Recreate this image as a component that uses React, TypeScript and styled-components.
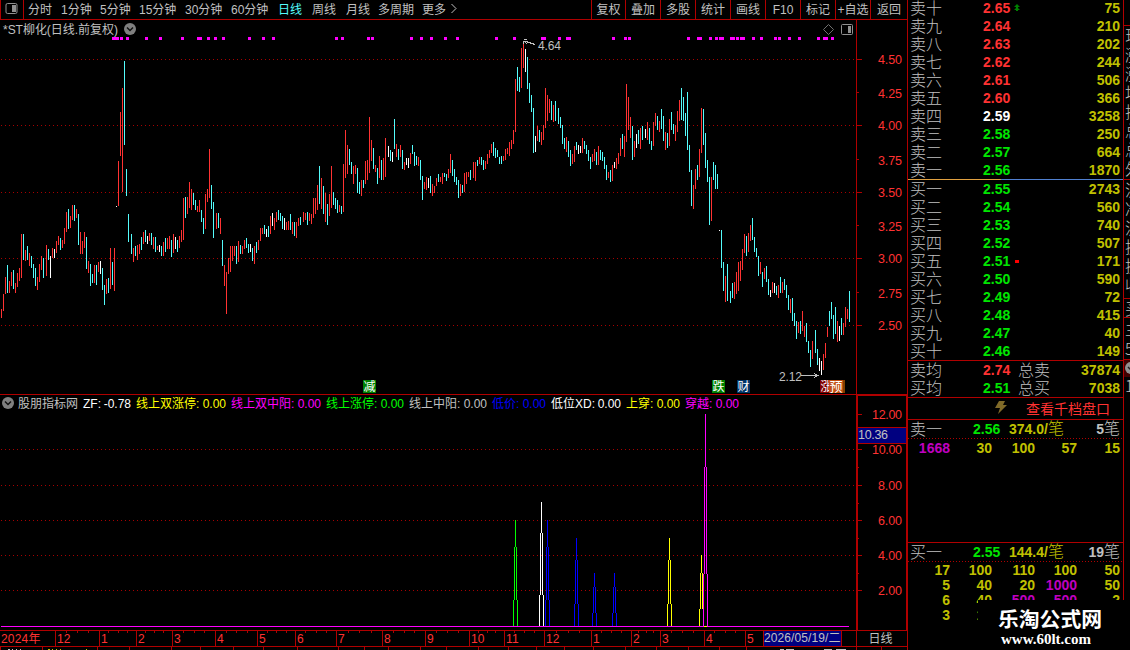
import React from "react";
import styled, { createGlobalStyle } from "styled-components";

const SANS = '"Liberation Sans", "Noto Sans CJK SC", sans-serif';
const RED = "#b00000";
const C = {
  r: "#ff3232",
  c: "#54fcfc",
  w: "#ffffff",
  gray: "#c0c0c0",
  green: "#00e600",
  yellow: "#c0c000",
  magenta: "#c000c0",
  hot: "#ff00ff",
};

const Global = createGlobalStyle`
  html, body { margin: 0; background: #000; overflow: hidden; }
  * { box-sizing: border-box; }
  body { font-family: ${SANS}; color: ${C.gray}; }
  svg { display: block; }
  svg text { font-family: ${SANS}; }
`;

const Screen = styled.div`
  display: flex;
  width: 1130px;
  height: 650px;
  background: #000;
  overflow: hidden;
`;
const Left = styled.main`
  width: 907px;
  display: flex;
  flex-direction: column;
`;

/* ---------- toolbar ---------- */
const Toolbar = styled.nav`
  height: 20px;
  display: flex;
  border-bottom: 1px solid ${RED};
  font-size: 12px;
  line-height: 20px;
  white-space: nowrap;
`;
const PanelToggle = styled.div`
  width: 24px;
  border: solid ${RED};
  border-width: 0 1px;
  padding: 3px 0 0 4px;
`;
const Periods = styled.div`
  flex: 1;
  display: flex;
  padding-left: 4px;
`;
const Period = styled.span<{ $w: number; $on?: boolean }>`
  width: ${(p) => p.$w}px;
  color: ${(p) => (p.$on ? C.c : C.gray)};
`;
const Tool = styled.span<{ $w?: number }>`
  width: ${(p) => p.$w ?? 35}px;
  border-left: 1px solid ${RED};
  text-align: center;
`;

const PERIODS: [string, number][] = [
  ["分时", 33], ["1分钟", 39], ["5分钟", 39], ["15分钟", 46], ["30分钟", 46], ["60分钟", 47],
  ["日线", 34], ["周线", 34], ["月线", 32], ["多周期", 44], ["更多", 28],
];
const TOOLS: [string, number][] = [
  ["复权", 34], ["叠加", 35], ["多股", 35], ["统计", 35], ["画线", 35], ["F10", 35], ["标记", 35], ["+自选", 35], ["返回", 37],
];

/* ---------- price chart data: colour, top, bottom; "+" opens a one pixel gap ---------- */
const BARS = `r309,318 r294,311 r277,294 c265,293 r281,293 r272,286 c270,289 r283,293 r273,287 r268,281 r234,278 c234,260 r250,261 c246,260 r253,266 c256,268 c264,278 c268,286 r277,290 r264,282 r256,270 c258,278 + r245,276 c249,260 w256,278 r248,258 w249,258 r241,253 r236,245 c238,250 r240,248 r228,244 r212,232 c209,229 r216,228 r205,220 c205,221 r209,218 c214,245 r232,254 r241,254 r232,248 c237,269 r261,273 c264,286 c274,283 r265,283 c265,285 r262,272 w261,274 c268,290 c285,305 r279,294 c278,293 r248,289 c262,285 r248,291 w206,207 r161,206 r112,156 r88,192 c61,145 c169,196 c214,242 + c234,254 r248,262 c246,256 r245,260 r244,254 c237,250 r232,244 c230,242 w236,244 r233,241 c233,245 r237,249 c237,252 r246,250 w245,252 c246,256 r242,256 c238,252 r238,249 r236,249 c240,257 r234,253 w237,249 c240,252 r236,248 r230,242 r198,240 c197,218 r197,214 r182,208 r189,210 c193,205 c200,210 r206,212 r200,212 c210,222 c218,234 r194,229 r189,202 r149,198 c185,209 c202,238 + r213,229 c213,228 r218,234 c240,266 r265,286 r272,314 r258,274 r246,272 r246,261 r246,256 c246,264 r241,262 c245,254 r246,254 r240,249 c238,248 c244,253 w244,252 c248,261 r246,264 c242,253 r240,250 r228,241 r228,234 c225,234 w229,237 c226,237 r216,234 w213,226 r218,230 r212,222 c210,220 c213,221 c216,229 w218,230 r222,230 r221,230 c214,230 r222,234 c222,236 r222,238 r218,226 c217,225 + r212,222 r213,220 c212,225 r213,221 r214,224 r198,218 r198,214 r185,210 c166,204 r178,209 c186,214 r193,222 c204,225 r194,216 r166,208 c192,205 c198,209 c200,213 r205,212 c206,214 r164,212 r130,178 r145,174 c149,165 c162,174 r166,184 r165,174 c168,193 c182,194 r180,196 c180,188 r161,184 r160,180 r117,173 r140,161 c148,169 r165,172 c168,184 r156,178 c160,180 r158,180 r138,177 + w146,157 c150,161 w152,162 c119,149 r144,157 c149,160 r145,157 c150,169 r162,170 w158,165 w158,168 r153,164 c145,154 c152,166 c156,165 r157,166 c160,180 c176,200 r182,189 r177,190 w178,188 c176,193 r184,196 r186,193 r178,186 c174,182 r177,182 r173,184 c173,177 c174,181 r169,178 r154,173 c160,176 c169,182 c177,185 c180,198 r184,196 c185,193 r173,192 r172,184 r172,177 c170,180 + r162,178 r162,181 c160,166 r157,164 c157,165 c160,170 r161,169 r154,164 r150,158 r144,153 c142,156 c148,158 c150,157 c157,164 c156,164 r156,161 r149,160 r148,154 r142,156 r140,149 r130,144 r79,132 c67,91 c77,92 r48,88 r43,68 w49,72 c57,89 c83,103 c95,112 c108,153 w136,152 r126,141 c130,142 r132,145 r125,140 r88,128 r95,121 r99,113 c101,120 r105,122 c101,121 + c108,124 c117,128 c125,144 c138,149 r137,152 c141,157 c150,166 r154,164 r146,162 c142,150 w145,154 w146,153 r138,153 c141,149 c145,154 c150,161 c157,169 r154,162 r149,161 c152,165 r146,165 c150,160 c152,161 c157,169 c165,180 r172,178 c170,182 r165,181 w162,168 r158,169 r153,164 r138,156 c134,149 r136,157 r84,142 r97,130 r117,138 c126,160 r141,157 w134,148 c130,144 r128,149 c126,140 + w129,138 r122,140 c128,144 c141,150 r122,146 r113,126 c116,130 r121,132 c109,129 c116,141 r132,150 c133,148 r119,146 c112,130 c124,134 r125,141 r111,132 r100,121 c88,120 c97,121 c113,136 c92,150 c145,172 c170,206 r185,209 r169,189 c165,180 r149,177 r108,153 c109,145 c133,168 c160,182 c177,225 r177,221 c162,180 c165,189 c174,189 w230,231 c230,268 c262,291 r276,302 c264,301 + c291,303 c283,298 r282,299 r272,294 r262,291 r261,281 r249,270 r234,253 c236,256 r233,252 r225,241 c218,240 c237,252 c248,257 c256,276 r262,274 c272,287 r268,279 c266,282 c279,295 w290,297 r282,293 w283,293 c286,295 r285,298 c277,293 r282,293 c279,290 c285,298 c295,310 r299,313 c298,321 c313,326 c321,339 r322,333 c321,334 r311,331 r326,337 c323,342 c341,353 c350,367 r341,359 + c330,353 c349,365 w358,371 w361,375 r354,370 r343,358 r327,337 c311,326 c302,319 c315,339 c307,334 r321,342 w326,341 c318,335 r323,335 r307,327 r309,319 c291,322`;

type Bar = { x: number; k: "r" | "c" | "w"; a: number; b: number };
const bars: Bar[] = [];
let cursor = 1;
BARS.split(" ").forEach((t) => {
  if (t === "+") {
    cursor += 1;
    return;
  }
  const [a, b] = t.slice(1).split(",").map(Number);
  bars.push({ x: cursor, k: t[0] as Bar["k"], a, b });
  cursor += 2;
});

const SIGNALS: [number, number?][] = [
  [112, 7], [120], [126], [145], [159], [181], [197, 5], [207], [214], [222], [248], [262], [272], [335], [341], [367], [371],
  [410], [420], [430], [444], [456], [495], [513], [541, 5], [558], [566, 5], [612], [624], [628], [687], [697, 5], [709],
  [715], [719, 5], [730, 5], [736], [740, 5], [752], [760], [774], [778], [788], [798], [817], [823, 5], [831],
];

const Grid = ({ ys }: { ys: number[] }) => (
  <>
    {ys.map((y) => (
      <line key={y} x1="1" x2="856" y1={y + 0.5} y2={y + 0.5} stroke="#a80000" strokeDasharray="1 3" />
    ))}
  </>
);
const Ticks = ({ ys, w }: { ys: number[]; w: number }) => (
  <>
    {ys.map((y) => (
      <rect key={y} x="857" y={y} width={w} height="1" fill={RED} />
    ))}
  </>
);
const Scale = ({ items }: { items: [string, number][] }) => (
  <>
    {items.map(([t, y]) => {
      const w = t.length > 4 ? 30 : 24;
      return (
        <text key={t} x={902 - w} y={y} textLength={w} fontSize="12.5" fill={C.r}>{t}</text>
      );
    })}
  </>
);
const Chevron = ({ cx, cy }: { cx: number; cy: number }) => (
  <g>
    <circle cx={cx} cy={cy} r="6" fill="#808080" />
    <path d={`M${cx - 3} ${cy - 1.5}l3 3l3-3`} fill="none" stroke="#111" strokeWidth="1.5" />
  </g>
);
const Badge = ({ x, w = 13, fill, t, size = 12 }: { x: number; w?: number; fill: string; t: string; size?: number }) => (
  <g>
    <rect x={x} y="380" width={w} height="13" fill={fill} />
    <text x={x + 0.5} y="391" fontSize={size} fill="#fff">{t}</text>
  </g>
);

const PriceChart = () => (
  <svg width="907" height="374" viewBox="0 20 907 374" shapeRendering="crispEdges">
    <Grid ys={[59, 125, 192, 258, 325]} />
    <text x="3" y="34" fontSize="12" textLength="115" fill={C.gray}>*ST柳化(日线.前复权)</text>
    <g shapeRendering="auto">
      <Chevron cx={130} cy={29} />
      <path d="M828.5 24.5l5 5l-5 5l-5-5z" fill="none" stroke="#707070" />
      <rect x="841.5" y="24.5" width="11" height="10" rx="1" fill="none" stroke="#909090" />
      <rect x="848" y="26" width="3" height="7" fill="#909090" />
    </g>
    {SIGNALS.map(([x, w]) => (
      <rect key={x} x={x} y="37" width={w ?? 3} height="3" fill={C.hot} />
    ))}
    {bars.map((b) => (
      <rect key={b.x} x={b.x} y={b.a} width="1" height={b.b - b.a} fill={C[b.k]} />
    ))}
    <path d="M523 41.5l3 0l9 3M523.5 41v3M524 39.5h3M524 41l3 3" fill="none" stroke={C.gray} />
    <text x="538" y="50" fontSize="12" textLength="23" fill={C.gray}>4.64</text>
    <text x="779" y="381" fontSize="12" textLength="23" fill={C.gray}>2.12</text>
    <path d="M801 375.5h18M814 373.5l4 2l-4 2" fill="none" stroke={C.gray} />
    <Badge x={363} fill="#008000" t="减" />
    <Badge x={712} fill="#008000" t="跌" />
    <Badge x={737} fill="#003468" t="财" />
    <Badge x={820} fill="#800000" t="涨" />
    <rect x="843" y="380" width="2" height="13" fill="#804000" />
    <Badge x={829} w={14} fill="#c04c10" t="预" size={13} />
    <rect x="856" y="20" width="1" height="374" fill={RED} />
    <Ticks ys={[59, 125, 192, 258, 325]} w={5} />
    <Ticks ys={[92, 159, 225, 292]} w={2} />
    <Scale items={[["4.50", 64], ["4.25", 98], ["4.00", 130], ["3.75", 165], ["3.50", 197], ["3.25", 231], ["3.00", 263], ["2.75", 298], ["2.50", 330]]} />
  </svg>
);

/* ---------- indicator ---------- */
const Indicator = styled.section`
  position: relative;
  height: 236px;
`;
const Legend = styled.div`
  position: absolute;
  top: 2px;
  left: 18px;
  display: flex;
  font-size: 12px;
  line-height: 16px;
  white-space: pre;
`;
const LegendItem = styled.span<{ $w: number; $c: string }>`
  width: ${(p) => p.$w}px;
  color: ${(p) => p.$c};
  display: flex;
  justify-content: space-between;
  margin-right: 5px;
`;
const LEGEND: [string, string, number, string][] = [
  ["股朋指标网", "", 60, C.gray],
  ["ZF:", "-0.78", 48, "#fff"],
  ["线上双涨停:", "0.00", 90, "#ffff00"],
  ["线上双中阳:", "0.00", 90, C.hot],
  ["线上涨停:", "0.00", 78, "#00ff00"],
  ["线上中阳:", "0.00", 78, C.gray],
  ["低价:", "0.00", 54, "#0000ff"],
  ["低位XD:", "0.00", 70, "#fff"],
  ["上穿:", "0.00", 54, "#ffff00"],
  ["穿越:", "0.00", 54, C.hot],
];

const SPIKES: [number, number, number, number, string][] = [
  [515, 520, 547, 600, "#00ff00"],
  [541, 502, 533, 595, "#ffffff"],
  [547, 520, 547, 600, "#0000ff"],
  [576, 538, 560, 604, "#0000ff"],
  [594, 573, 587, 613, "#0000ff"],
  [614, 573, 587, 613, "#0000ff"],
  [669, 538, 560, 604, "#ffff00"],
  [701, 555, 573, 609, "#ffff00"],
  [705, 414, 467, 574, "#ff00ff"],
];

const IndicatorChart = () => (
  <svg width="907" height="236" viewBox="0 394 907 236" shapeRendering="crispEdges">
    <rect x="0" y="394" width="857" height="1" fill={RED} />
    <Grid ys={[449, 485, 520, 555, 590]} />
    <g shapeRendering="auto"><Chevron cx={8} cy={403} /></g>
    {SPIKES.map(([x, a, b, c, fill]) => (
      <path
        key={x}
        fill={fill}
        d={`M${x} ${a}h1v${b - a}h-1zM${x - 1} ${b}h1v${c - b}h-1zM${x + 1} ${b}h1v${c - b}h-1zM${x - 2} ${c}h1V626h-1zM${x + 2} ${c}h1V626h-1z`}
      />
    ))}
    <rect x="1" y="626" width="848" height="1" fill={C.hot} />
    <rect x="704" y="626" width="3" height="1" fill="#ffff00" />
    <rect x="857" y="427" width="50" height="17" fill={RED} />
    <rect x="857" y="428" width="50" height="15" fill="#000080" />
    <text x="858" y="439" fontSize="12.5" textLength="30" fill={C.gray}>10.36</text>
    <path d="M857 630V395H906.5V630" fill="none" stroke={RED} strokeWidth="2" />
    <Ticks ys={[414, 449, 485, 520, 555, 590]} w={5} />
    <Ticks ys={[467, 503, 538, 573]} w={2} />
    <Scale items={[["12.00", 419], ["10.00", 454], ["8.00", 490], ["6.00", 525], ["4.00", 560], ["2.00", 595]]} />
  </svg>
);

/* ---------- time axis ---------- */
const TimeAxis = styled.div`
  height: 17px;
  display: flex;
  border: solid ${RED};
  border-width: 1px 0;
  font-size: 12px;
  line-height: 17px;
  color: ${C.r};
`;
const Month = styled.div<{ $w: number }>`
  position: relative;
  width: ${(p) => p.$w}px;
  padding-left: 1px;
  letter-spacing: 0.2px;
  white-space: nowrap;
  & + & { border-left: 1px solid ${RED}; }
`;
const MonthTicks = styled.div`
  position: absolute;
  inset: 0;
  display: flex;
  justify-content: space-evenly;
  i { width: 1px; height: 2px; background: ${RED}; }
`;
const CurrentDate = styled.div`
  width: 79px;
  height: 15px;
  line-height: 15px;
  border: solid ${RED};
  border-width: 0 1px;
  background: #000080;
  color: ${C.gray};
  white-space: nowrap;
  letter-spacing: 0.1px;
`;
const AxisUnit = styled.div`
  margin-left: 14px;
  width: 51px;
  height: 15px;
  line-height: 16px;
  border-left: 1px solid ${RED};
  text-align: center;
  color: ${C.gray};
  padding-right: 3px;
`;
const MONTHS: [string, number][] = [
  ["2024年", 55], ["12", 44], ["1", 37], ["2", 36], ["3", 43], ["4", 42], ["5", 38], ["6", 41], ["7", 46], ["8", 43], ["9", 44],
  ["10", 35], ["11", 40], ["12", 47], ["1", 40], ["2", 29], ["3", 44], ["4", 41], ["5", 18],
];
const Footer = () => (
  <svg width="907" height="3" viewBox="0 0 907 3" shapeRendering="crispEdges">
    {[0, 42, 97, 129, 171, 200, 233, 263, 297, 338, 364, 388, 420, 446, 478, 508, 536, 564, 593, 625, 656, 688, 719, 746, 856, 881].map((x) => (
      <rect key={x} x={x} y="0" width="1" height="3" fill={RED} />
    ))}
    <path d="M8 2.5h2m2 0h1m3 0h1m3 0h1M780 2.5h4m2 0h8m30 0h8m4 0h10" stroke={C.gray} />
    <path d="M48 2.5h2m2 0h1m3 0h1m3 0h1m25 0h1" stroke={C.yellow} />
  </svg>
);

/* ---------- order book ---------- */
const Book = styled.aside`
  width: 217px;
  border: solid ${RED};
  border-width: 0 1px;
  font-size: 16px;
`;
const Ladder = styled.div<{ $first?: boolean }>`
  margin-top: ${(p) => (p.$first ? -1 : 0)}px;
`;
const Level = styled.div`
  height: 18px;
  display: flex;
  align-items: center;
  line-height: 18px;
  padding: 0 3px 0 2px;
  white-space: nowrap;
`;
const Label = styled.span<{ $w?: number }>`
  width: ${(p) => p.$w ?? 73}px;
  height: 18px;
  line-height: 16px;
  font-family: "Noto Sans CJK SC", sans-serif;
  font-weight: 300;
  color: ${C.gray};
`;
const Num = styled.b<{ $c: string; $w?: number }>`
  width: ${(p) => (p.$w ? `${p.$w}px` : "auto")};
  font-size: 14px;
  color: ${(p) => p.$c};
`;
const Volume = styled(Num)`
  margin-left: auto;
  text-align: right;
`;
const Split = styled.div`
  height: 1px;
  background: linear-gradient(90deg, #e0a040 93px, #5080d0 93px);
`;
const Rule = styled.div<{ $dotted?: boolean }>`
  height: 1px;
  background: ${(p) => (p.$dotted ? `repeating-linear-gradient(90deg, ${RED} 0 1px, #000 1px 3px)` : RED)};
`;
const DepthLink = styled.div`
  height: 21px;
  display: flex;
  align-items: center;
  padding: 0 0 2px 87px;
  color: ${C.r};
  font-size: 14px;
  gap: 19px;
`;
const Queue = styled.div<{ $h: number; $pitch: number; $top?: number }>`
  height: ${(p) => p.$h}px;
  padding-top: ${(p) => p.$top ?? 0}px;
  display: grid;
  grid-template-columns: 42px 42px 43px 42px 43px;
  grid-auto-rows: ${(p) => p.$pitch}px;
  align-items: center;
  text-align: right;
  overflow: hidden;
`;
const Pen = styled.span`
  color: inherit;
  font-size: 16px;
  font-weight: 300;
`;

const NUM = ["一", "二", "三", "四", "五", "六", "七", "八", "九", "十"];
const ASKS = [75, 210, 202, 244, 506, 366, 3258, 250, 664, 1870];
const BIDS = [2743, 560, 740, 507, 171, 590, 72, 415, 40, 149];
const priceColor = (cents: number) => (cents > 259 ? C.r : cents === 259 ? "#fff" : C.green);

const LevelRow = ({ side, n, cents, vol, mark }: { side: string; n: string; cents: number; vol: number; mark?: React.ReactNode }) => (
  <Level>
    <Label>{side}{n}</Label>
    <Num $c={priceColor(cents)} $w={31}>{(cents / 100).toFixed(2)}</Num>
    {mark}
    <Volume $c={C.yellow}>{vol}</Volume>
  </Level>
);
const UpMark = () => (
  <svg width="6" height="8" viewBox="0 0 6 8"><path d="M3 0l3 3h-6zM3 3l3 3h-6zM2 2h2v5h-2z" fill="#008000" /></svg>
);
const DownMark = () => (
  <svg width="6" height="8" viewBox="0 0 6 8"><rect x="1" y="3" width="4" height="3" fill="#f00" /></svg>
);

const ASK_QUEUE = ["1668", "30", "100", "57", "15"];
const BID_QUEUE = ["17", "100", "110", "100", "50", "5", "40", "20", "1000", "50", "6", "40", "500", "500", "2", "3", "10"];
const Orders = ({ items, h, pitch, top }: { items: string[]; h: number; pitch: number; top?: number }) => (
  <Queue $h={h} $pitch={pitch} $top={top}>
    {items.map((v, i) => (
      <Num key={i} $c={Number(v) >= 500 ? C.magenta : C.yellow}>{v}</Num>
    ))}
  </Queue>
);
const QueueHead = ({ name, price, avg, count }: { name: string; price: string; avg: string; count: string }) => (
  <Level>
    <Label $w={63}>{name}</Label>
    <Num $c={C.green} $w={36}>{price}</Num>
    <Num $c={C.yellow}>{avg}/<Pen>笔</Pen></Num>
    <Volume $c={C.gray}>{count}<Pen>笔</Pen></Volume>
  </Level>
);

/* ---------- clipped neighbouring panel ---------- */
const Edge = styled.aside`
  width: 6px;
  padding-top: 25px;
  overflow: hidden;
  font-size: 16px;
  line-height: 18px;
  white-space: nowrap;
`;
const EdgeCell = styled.div<{ $h: number; $dark?: boolean }>`
  height: ${(p) => p.$h}px;
  padding: ${(p) => (p.$dark ? "2px 0 0 1px" : "0")};
  border-top: 1px solid ${RED};
  background: ${(p) => (p.$dark ? "#400000" : "transparent")};
  overflow: hidden;
`;
const EdgeText = styled.div<{ $h?: number }>`
  height: ${(p) => p.$h ?? 19}px;
  line-height: ${(p) => p.$h ?? 19}px;
  font-family: "Noto Sans CJK SC", sans-serif;
  font-weight: 300;
  text-indent: 1px;
`;

const Watermark = styled.div`
  position: absolute;
  left: 978px;
  top: 600px;
  width: 152px;
  height: 50px;
  padding: 6px 0 0 20px;
  background: #000;
  color: #fff;
  white-space: nowrap;
`;
const SiteName = styled.div`
  font: 700 20.8px/24px "Noto Sans CJK SC", sans-serif;
`;
const SiteUrl = styled.div`
  font: 700 15px/18px "Liberation Serif", serif;
  padding-left: 3px;
`;

export default function App() {
  return (
    <Screen>
      <Global />
      <Left>
        <Toolbar>
          <PanelToggle>
            <svg width="14" height="12" viewBox="0 0 14 12">
              <rect x="1" y="0.5" width="11" height="10" rx="1.5" fill="none" stroke="#909090" />
              <rect x="7" y="2" width="4" height="7" fill="#909090" />
            </svg>
          </PanelToggle>
          <Periods>
            {PERIODS.map(([t, w]) => (
              <Period key={t} $w={w} $on={t === "日线"}>{t}</Period>
            ))}
            <svg width="8" height="18" viewBox="0 0 8 18"><path d="M1.5 4l4.5 4.5l-4.5 4.5" fill="none" stroke={C.gray} /></svg>
          </Periods>
          {TOOLS.map(([t, w]) => (
            <Tool key={t} $w={w}>{t}</Tool>
          ))}
        </Toolbar>
        <PriceChart />
        <Indicator>
          <IndicatorChart />
          <Legend>
            {LEGEND.map(([a, b, w, c]) => (
              <LegendItem key={a} $w={w} $c={c}><span>{a}</span><span>{b}</span></LegendItem>
            ))}
          </Legend>
        </Indicator>
        <TimeAxis>
          {MONTHS.map(([t, w], i) => (
            <Month key={i} $w={w}>
              {t}
              {i > 0 && i < 18 && <MonthTicks><i /><i /><i /></MonthTicks>}
            </Month>
          ))}
          <CurrentDate>2026/05/19/二</CurrentDate>
          <AxisUnit>日线</AxisUnit>
        </TimeAxis>
        <Footer />
      </Left>
      <Book>
        <Ladder $first>
          {ASKS.map((v, i) => (
            <LevelRow key={i} side="卖" n={NUM[9 - i]} cents={265 - i} vol={v} mark={i === 0 ? <UpMark /> : null} />
          ))}
        </Ladder>
        <Split />
        <Ladder>
          {BIDS.map((v, i) => (
            <LevelRow key={i} side="买" n={NUM[i]} cents={255 - i} vol={v} mark={i === 4 ? <DownMark /> : null} />
          ))}
        </Ladder>
        <Rule />
        <Level>
          <Label>卖均</Label><Num $c={C.r} $w={35}>2.74</Num><Label $w={33}>总卖</Label><Volume $c={C.yellow}>37874</Volume>
        </Level>
        <Level>
          <Label>买均</Label><Num $c={C.green} $w={35}>2.51</Num><Label $w={33}>总买</Label><Volume $c={C.yellow}>7038</Volume>
        </Level>
        <Rule />
        <DepthLink>
          <svg width="12" height="13" viewBox="0 0 12 13"><path d="M4 0h6L8 4h4L3 13L5 7H0z" fill="#806a28" /></svg>
          查看千档盘口
        </DepthLink>
        <Rule />
        <QueueHead name="卖一" price="2.56" avg="374.0" count="5" />
        <Rule $dotted />
        <Orders items={ASK_QUEUE} h={103} pitch={18} />
        <Rule />
        <QueueHead name="买一" price="2.55" avg="144.4" count="19" />
        <Rule $dotted />
        <Orders items={BID_QUEUE} h={88} pitch={15} />
      </Book>
      <Edge>
        <EdgeCell $h={154}>
          {["现", "涨", "涨", "均", "振", "总", "总", "外"].map((t, i) => <EdgeText key={i}>{t}</EdgeText>)}
        </EdgeCell>
        <EdgeCell $h={119}>
          {["流", "净", "流", "换", "换", "收"].map((t, i) => <EdgeText key={i}>{t}</EdgeText>)}
        </EdgeCell>
        <EdgeCell $h={19}><EdgeText>买</EdgeText></EdgeCell>
        <EdgeCell $h={42}>
          <EdgeText $h={20}>主</EdgeText>
          <EdgeText $h={20}>5</EdgeText>
        </EdgeCell>
        <EdgeCell $h={18} $dark>
          <svg width="12" height="12" viewBox="0 0 12 12"><circle cx="6" cy="6" r="6" fill="#909090" /><path d="M3 5l3 3l3-3" fill="none" stroke="#222" strokeWidth="1.5" /></svg>
        </EdgeCell>
        <EdgeText $h={17}>1</EdgeText>
      </Edge>
      <Watermark>
        <SiteName>乐淘公式网</SiteName>
        <SiteUrl>www.60lt.com</SiteUrl>
      </Watermark>
    </Screen>
  );
}
